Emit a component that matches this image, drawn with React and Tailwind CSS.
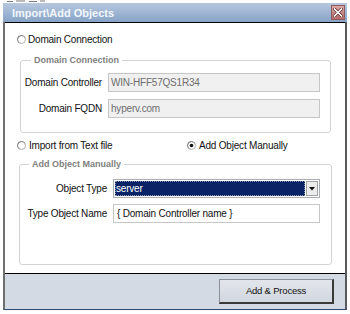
import React from "react";

function Radio({ checked }) {
  return (
    <svg width="9" height="9" viewBox="0 0 9 9" className="shrink-0">
      <defs>
        <linearGradient id={checked ? "rg1" : "rg0"} x1="0" y1="0" x2="1" y2="1">
          <stop offset="0" stopColor="#4a4a4a" />
          <stop offset="1" stopColor="#c8c8c8" />
        </linearGradient>
      </defs>
      <circle cx="4.5" cy="4.5" r="4" fill="#ffffff" stroke={`url(#${checked ? "rg1" : "rg0"})`} strokeWidth="1" />
      {checked && <circle cx="4.5" cy="4.5" r="1.8" fill="#111111" />}
    </svg>
  );
}

export default function App() {
  return (
    <div className="w-[350px] h-[314px] bg-white overflow-hidden font-['Liberation_Sans',Arial,sans-serif] text-[10px] tracking-[-0.2px] text-[#111]">
      <div className="h-[3px] overflow-hidden pl-[7px]">
        <svg width="40" height="3" viewBox="0 0 40 3">
          <path d="M0 1.5 H6 M9 1 H18 M22 1.5 H30 M33 1 H38" stroke="#777" strokeWidth="1.2" />
        </svg>
      </div>
      <div className="ml-[3px] w-[344px] h-[307px] flex flex-col">
        {/* Title bar */}
        <div className="h-[19px] shrink-0 flex items-center justify-between pl-[9px] pr-[2px] bg-gradient-to-b from-[#b7c8de] to-[#87a3c7]">
          <span className="font-bold text-[11px] leading-[12px] tracking-normal text-[#f2f6fb]">Import\Add Objects</span>
          <div className="w-[14px] h-[15px] flex items-center justify-center bg-gradient-to-b from-[#dba6a3] to-[#b86d69] border border-[#8e5c5c]">
            <svg width="10" height="9" viewBox="0 0 10 9">
              <path d="M1.5 1 L8.5 8 M8.5 1 L1.5 8" stroke="#5a2b2b" strokeWidth="3" strokeLinecap="square" />
              <path d="M1.5 1 L8.5 8 M8.5 1 L1.5 8" stroke="#ffffff" strokeWidth="1.6" strokeLinecap="square" />
            </svg>
          </div>
        </div>
        {/* Body */}
        <div className="flex-1 flex flex-col border-l-2 border-l-[#6f6f6f] border-r-2 border-r-[#5a5a5a] border-b border-b-[#2e4a6e]">
          <div className="h-[251px] shrink-0 bg-white border-t border-t-black flex flex-col items-start">
            <div className="mt-[9px] ml-[12px] h-[14px] flex items-center gap-[2px]">
              <Radio />
              <span>Domain Connection</span>
            </div>

            <fieldset className="mt-[8px] ml-[15px] w-[311px] border border-[#d3d3d3] rounded-[3px] pt-[7px] pb-[14px]">
              <legend className="ml-[10px] px-[3px] font-bold text-[9px] leading-[12px] tracking-normal text-[#808080]">Domain Connection</legend>
              <div className="grid grid-cols-[81px_212px] gap-x-[6px] gap-y-[7px] items-center">
                <span className="text-right">Domain Controller</span>
                <div className="h-[19px] border border-[#c6c6c6] bg-[#f0f0f0] px-[2px] flex items-center text-[#6e6e6e]">WIN-HFF57QS1R34</div>
                <span className="text-right">Domain FQDN</span>
                <div className="h-[19px] border border-[#c6c6c6] bg-[#f0f0f0] px-[2px] flex items-center text-[#6e6e6e]">hyperv.com</div>
              </div>
            </fieldset>

            <div className="mt-[5px] ml-[12px] h-[14px] flex items-center">
              <div className="w-[170px] flex items-center gap-[3px]">
                <Radio />
                <span>Import from Text file</span>
              </div>
              <div className="flex items-center gap-[3px]">
                <Radio checked />
                <span>Add Object Manually</span>
              </div>
            </div>

            <fieldset className="mt-[6px] ml-[14px] w-[313px] border border-[#d3d3d3] rounded-[3px] pt-[9px] pb-[41px]">
              <legend className="ml-[9px] px-[3px] font-bold text-[9px] leading-[12px] tracking-normal text-[#808080]">Add Object Manually</legend>
              <div className="grid grid-cols-[87px_207px] gap-x-[6px] gap-y-[6px] items-center">
                <span className="text-right">Object Type</span>
                <div className="h-[19px] border border-[#a9aeb5] bg-white p-[1px] flex gap-[1px]">
                  <div className="flex-1 bg-[#0b2366] text-white flex items-center px-[1px] outline outline-1 outline-dotted outline-[#8a93a8] -outline-offset-1">server</div>
                  <div className="w-[12px] bg-[#ececec] border border-[#a3a3a3] flex items-center justify-center">
                    <svg width="6" height="4" viewBox="0 0 6 4">
                      <path d="M0 0 H6 L3 3.5 Z" fill="#111" />
                    </svg>
                  </div>
                </div>
                <span className="text-right">Type Object Name</span>
                <div className="h-[19px] border border-[#c6c6c6] bg-white px-[3px] flex items-center">{"{ Domain Controller name }"}</div>
              </div>
            </fieldset>
          </div>
          <div className="flex-1 border-t border-t-black bg-[#d3dae4] flex justify-end items-start pt-[5px] pr-[11px]">
            <div className="w-[115px] h-[25px] flex items-center justify-center text-[9.5px] bg-gradient-to-b from-[#e2e6ec] to-[#d2d7df] border border-[#8a919d] border-r-2 border-b-2 border-r-[#3a3a3a] border-b-[#3a3a3a]">
              Add &amp; Process
            </div>
          </div>
        </div>
      </div>
    </div>
  );
}
